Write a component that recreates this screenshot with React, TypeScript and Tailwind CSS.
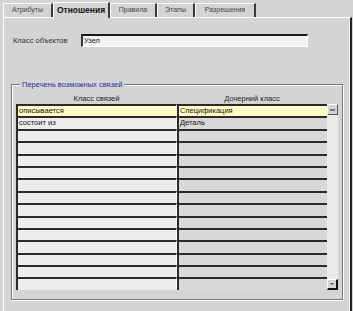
import React from "react";

const tabs = [
  { label: "Атрибуты", w: "w-[50px]", active: false },
  { label: "Отношения", w: "w-[57px]", active: true },
  { label: "Правила", w: "w-[47px]", active: false },
  { label: "Этапы", w: "w-[38px]", active: false },
  { label: "Разрешения", w: "w-[61px]", active: false },
];

const rows: [string, string][] = [
  ["описывается", "Спецификация"],
  ["состоит из", "Деталь"],
];

export default function App() {
  const all = Array.from({ length: 15 }, (_, i) => rows[i] ?? ["", ""]);
  return (
    <div
      className="w-[353px] h-[311px] overflow-hidden bg-[#d4d4d4] text-[#111]"
      style={{ fontFamily: '"Liberation Sans", Arial, sans-serif' }}
    >
      {/* Tabs */}
      <div className="flex items-end h-[17px] pl-[3px]">
        {tabs.map((t) => (
          <div
            key={t.label}
            className={`${t.w} flex items-center justify-center border-r-2 border-r-[#3a3a3a] border-t border-t-white border-l border-l-white ${
              t.active
                ? "h-[16px] font-bold text-[8.5px] -mb-px bg-[#d4d4d4] relative z-10"
                : "h-[14px] text-[7px] text-[#444]"
            }`}
          >
            {t.label}
          </div>
        ))}
      </div>

      {/* Panel */}
      <div className="ml-[3px] mr-px h-[300px] border-t border-l border-white border-r-2 border-r-[#222] shadow-[inset_-1px_0_0_#efefef]">
        <div className="flex items-center mt-[16px] h-[13px]">
          <div className="ml-[9px] w-[68px] text-[7.5px] text-[#333]">Класс объектов</div>
          <div className="w-[227px] h-[13px] bg-[#f2f2f2] border-t-2 border-l-2 border-t-[#1a1a1a] border-l-[#3a3a3a] border-b border-r border-b-white border-r-white flex items-center pl-[1px] text-[7.5px] leading-none text-[#222]">
            Узел
          </div>
        </div>

        {/* Group box */}
        <div className="relative mt-[37px] ml-[7px] w-[332px] h-[216px] border border-[#7a7a7a] shadow-[inset_1px_1px_0_#fff,1px_1px_0_#fff]">
          <div className="absolute -top-[6px] left-[8px] px-[2px] bg-[#d4d4d4] text-[7.5px] leading-[11px] text-[#2a2aa8]">
            Перечень возможных связей
          </div>
          <div className="flex mt-[9px] h-[9px] ml-[4px] text-[7.5px] leading-[9px] text-[#222]">
            <div className="w-[161px] text-center">Класс связей</div>
            <div className="w-[150px] text-center">Дочерний класс</div>
          </div>
          <div className="flex ml-[4px] mt-px">
            <div className="flex flex-col">
              {all.map((r, i) => (
                <div key={i} className="flex h-[12.4px]">
                  <div
                    className={`w-[161px] border-t-2 border-l-2 border-[#2a2a2a] border-r border-r-white text-[7.5px] leading-[10px] pl-[1px] overflow-hidden ${
                      i === 0 ? "bg-[#ffffc6]" : "bg-[#ececec]"
                    }`}
                  >
                    {r[0]}
                  </div>
                  <div
                    className={`w-[150px] border-t-2 border-l-2 border-[#2a2a2a] text-[7.5px] leading-[10px] pl-[1px] overflow-hidden ${
                      i === 0 ? "bg-[#ffffc6]" : "bg-[#d8d8d8]"
                    }`}
                  >
                    {r[1]}
                  </div>
                </div>
              ))}
            </div>
            {/* Scrollbar */}
            <div className="w-[11px] flex flex-col justify-between bg-[#ebebeb]">
              <div className="h-[11px] bg-[#d4d4d4] border-t border-l border-white border-r border-b border-r-[#555] border-b-[#555] flex items-center justify-center">
                <div className="w-[5px] h-[2px] bg-[#777]" />
              </div>
              <div className="h-[11px] bg-[#d4d4d4] border-t border-l border-white border-r-2 border-b-2 border-r-[#111] border-b-[#111] flex items-center justify-center">
                <div className="w-0 h-0 border-l-[2px] border-r-[2px] border-t-[2px] border-l-transparent border-r-transparent border-t-[#555]" />
              </div>
            </div>
          </div>
        </div>
      </div>
    </div>
  );
}
